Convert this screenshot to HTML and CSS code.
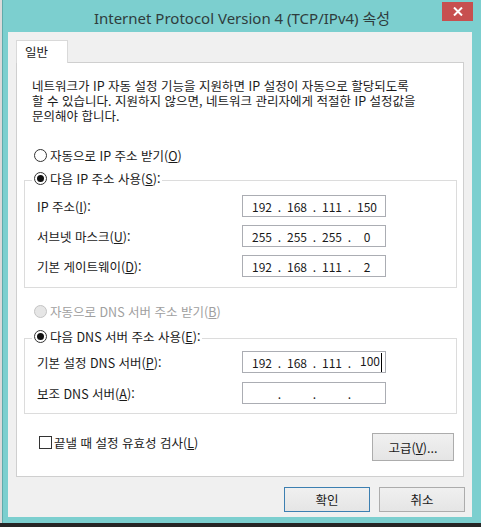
FILE: index.html
```html
<!DOCTYPE html>
<html lang="ko">
<head>
  <meta charset="UTF-8" />
  <title>Internet Protocol Version 4 (TCP/IPv4) 속성</title>
  <link rel="stylesheet" href="styles.css">
</head>
<body>
  <div class="screen">
    <div class="window">
      <div class="titlebar">
        <span class="title">Internet Protocol Version 4 (TCP/IPv4) 속성</span>
        <button class="close" aria-label="닫기">
          <svg width="10" height="9" viewBox="0 0 10 9"><path d="M1 0.5 L9 8.5 M9 0.5 L1 8.5" stroke="#fff" stroke-width="2" fill="none"/></svg>
        </button>
      </div>

      <div class="client">
        <div class="tabs"><span class="tab">일반</span></div>

        <div class="panel">
          <p class="desc">네트워크가 IP 자동 설정 기능을 지원하면 IP 설정이 자동으로 할당되도록<br>할 수 있습니다. 지원하지 않으면, 네트워크 관리자에게 적절한 IP 설정값을<br>문의해야 합니다.</p>

          <label class="opt auto-ip"><input type="radio" name="ip"><span>자동으로 IP 주소 받기(<u>O</u>)</span></label>

          <fieldset class="group">
            <legend><label class="opt"><input type="radio" name="ip" checked><span>다음 IP 주소 사용(<u>S</u>):</span></label></legend>
            <div class="field">
              <span>IP 주소(<u>I</u>):</span>
              <div class="ip"><span class="oct">192</span><span class="dot">.</span><span class="oct">168</span><span class="dot">.</span><span class="oct">111</span><span class="dot">.</span><span class="oct">150</span></div>
            </div>
            <div class="field">
              <span>서브넷 마스크(<u>U</u>):</span>
              <div class="ip"><span class="oct">255</span><span class="dot">.</span><span class="oct">255</span><span class="dot">.</span><span class="oct">255</span><span class="dot">.</span><span class="oct">0</span></div>
            </div>
            <div class="field">
              <span>기본 게이트웨이(<u>D</u>):</span>
              <div class="ip"><span class="oct">192</span><span class="dot">.</span><span class="oct">168</span><span class="dot">.</span><span class="oct">111</span><span class="dot">.</span><span class="oct">2</span></div>
            </div>
          </fieldset>

          <label class="opt auto-dns"><input type="radio" name="dns" disabled><span>자동으로 DNS 서버 주소 받기(<u>B</u>)</span></label>

          <fieldset class="group dns">
            <legend><label class="opt"><input type="radio" name="dns" checked><span>다음 DNS 서버 주소 사용(<u>E</u>):</span></label></legend>
            <div class="field">
              <span>기본 설정 DNS 서버(<u>P</u>):</span>
              <div class="ip"><span class="oct">192</span><span class="dot">.</span><span class="oct">168</span><span class="dot">.</span><span class="oct">111</span><span class="dot">.</span><span class="oct edit">100</span></div>
            </div>
            <div class="field">
              <span>보조 DNS 서버(<u>A</u>):</span>
              <div class="ip"><span class="oct"></span><span class="dot">.</span><span class="oct"></span><span class="dot">.</span><span class="oct"></span><span class="dot">.</span><span class="oct"></span></div>
            </div>
          </fieldset>

          <div class="foot">
            <label class="check"><input type="checkbox"><span>끝낼 때 설정 유효성 검사(<u>L</u>)</span></label>
            <button class="btn advanced">고급(<u>V</u>)...</button>
          </div>
        </div>

        <div class="actions">
          <button class="btn default">확인</button>
          <button class="btn">취소</button>
        </div>
      </div>
    </div>
    <div class="taskbar"></div>
  </div>
</body>
</html>
```

FILE: styles.css
```css
body {
  margin: 0;
  background: #dadada;
  font-family: "Noto Sans CJK KR", sans-serif;
  font-size: 12.5px;
  color: #1a1a1a;
}

.screen {
  width: 481px;
  height: 527px;
  display: flex;
  flex-direction: column;
  overflow: hidden;
}

.window {
  position: relative;
  height: 523px;
  margin-left: 2px;
  border-left: 1px solid #5fabab;
  background: #7ccfcf;
  display: flex;
  flex-direction: column;
}

.taskbar {
  flex: 1;
  background: #262626;
}

.titlebar {
  height: 32px;
  display: flex;
  align-items: center;
  justify-content: center;
}

.title {
  font-family: "Noto Sans", "Noto Sans CJK KR", sans-serif;
  font-size: 15px;
  color: #2f3d3d;
  padding-top: 2px;
}

.close {
  position: absolute;
  top: 2px;
  right: 8px;
  width: 31px;
  height: 19px;
  padding: 0;
  border: 0;
  background: #c75050;
  display: flex;
  align-items: center;
  justify-content: center;
}

.client {
  flex: 1;
  margin: 0 9px 6px 5px;
  padding: 8px 8px 0;
  background: #f0f0f0;
  display: flex;
  flex-direction: column;
}

.tabs {
  display: flex;
}

.tab {
  position: relative;
  box-sizing: border-box;
  width: 52px;
  height: 23px;
  padding-left: 8px;
  line-height: 21px;
  background: #fff;
  border: 1px solid #d9d9d9;
  border-bottom: 0;
  margin-bottom: -1px;
}

.panel {
  background: #fff;
  border: 1px solid #cfcfcf;
  padding: 15px 6px 15px 7px;
}

.desc {
  margin: 0 0 0 8px;
  line-height: 15px;
  white-space: nowrap;
}

.opt {
  display: flex;
  align-items: center;
  gap: 3px;
  height: 16px;
  white-space: nowrap;
}

.opt input {
  appearance: none;
  box-sizing: border-box;
  margin: 0;
  width: 13px;
  height: 13px;
  border: 1px solid #333;
  border-radius: 50%;
  background: #fff;
  display: grid;
  place-content: center;
}

.opt input:checked::before {
  content: "";
  width: 7px;
  height: 7px;
  border-radius: 50%;
  background: #111;
}

.auto-ip {
  margin: 24px 0 0 10px;
}

.auto-dns {
  margin: 15px 0 0 10px;
  color: #a0a0a0;
}

.auto-dns input {
  border-color: #c4c4c4;
  background: #e6e6e6;
}

.group {
  margin: 7px 0 0;
  padding: 5px 0 10px 7px;
  border: 1px solid #dcdcdc;
  min-width: 0;
}

.group legend {
  padding: 0 2px 4px;
}

.group.dns {
  margin-top: 9px;
  padding: 3px 0 9px 7px;
}

.field {
  display: grid;
  grid-template-columns: 205px 144px;
  align-items: center;
  margin-left: 5px;
}

.field + .field {
  margin-top: 8px;
}

.dns .field + .field {
  margin-top: 9px;
}

.ip {
  box-sizing: border-box;
  height: 22px;
  padding-left: 7px;
  border: 1px solid #abadb3;
  background: #fff;
  font-size: 12px;
  display: flex;
  align-items: center;
}

.oct {
  width: 24px;
  text-align: center;
}

.oct.edit {
  width: 27px;
  text-align: right;
}

.oct.edit::after {
  content: "";
  display: inline-block;
  width: 1px;
  height: 19px;
  margin-left: 1px;
  vertical-align: middle;
  background: #000;
}

.dot {
  width: 11px;
  text-align: center;
}

.foot {
  display: flex;
  justify-content: space-between;
  align-items: flex-start;
  margin: 19px 3px 0 15px;
}

.check {
  display: flex;
  align-items: center;
  gap: 2px;
  height: 14px;
  margin-top: 2px;
  white-space: nowrap;
}

.check input {
  appearance: none;
  box-sizing: border-box;
  margin: 0;
  width: 13px;
  height: 13px;
  border: 1px solid #333;
  background: #fff;
}

.btn {
  font: inherit;
  color: #1a1a1a;
  padding: 0;
  background: linear-gradient(#f0f0f0, #e5e5e5);
  border: 1px solid #acacac;
}

.advanced {
  width: 82px;
  height: 28px;
}

.actions {
  display: flex;
  justify-content: flex-end;
  gap: 9px;
  margin: 10px -1px 0 0;
}

.actions .btn {
  width: 86px;
  height: 25px;
}

.btn.default {
  border-color: #3c7fb1;
}
```
